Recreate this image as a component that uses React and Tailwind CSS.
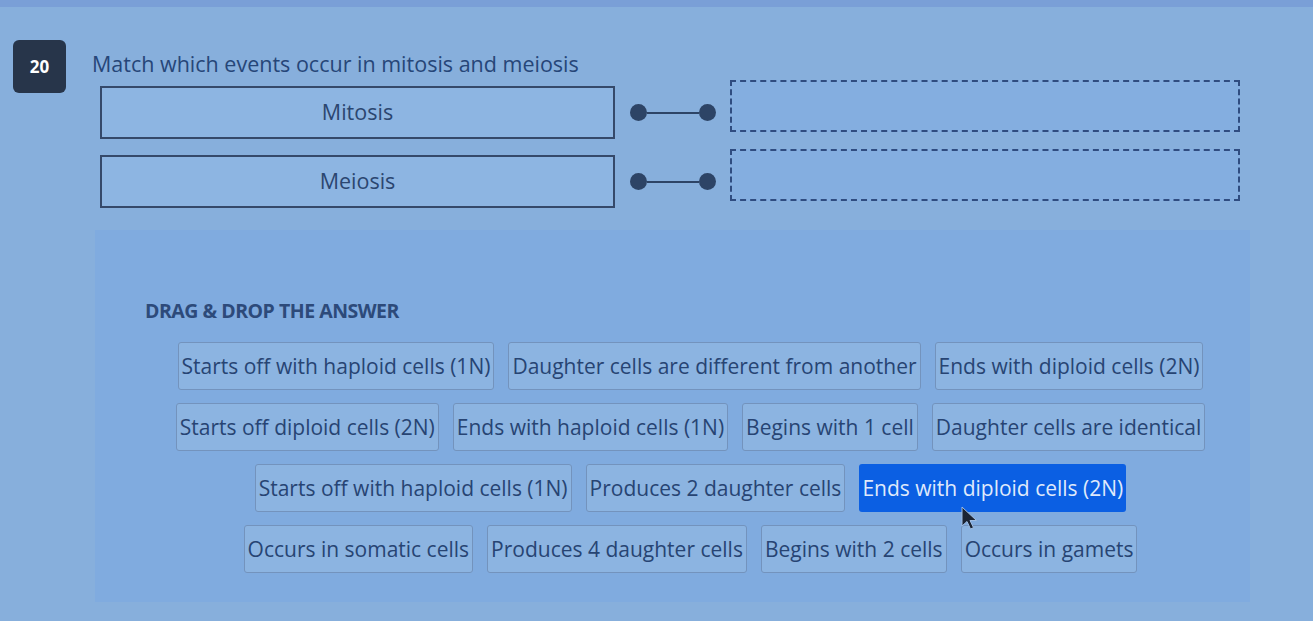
import React from 'react'

const rows = [
  ['Starts off with haploid cells (1N)', 'Daughter cells are different from another', 'Ends with diploid cells (2N)'],
  ['Starts off diploid cells (2N)', 'Ends with haploid cells (1N)', 'Begins with 1 cell', 'Daughter cells are identical'],
  ['Starts off with haploid cells (1N)', 'Produces 2 daughter cells', 'Ends with diploid cells (2N)'],
  ['Occurs in somatic cells', 'Produces 4 daughter cells', 'Begins with 2 cells', 'Occurs in gamets'],
]

const Connector = () => (
  <div className="flex w-[115px] items-center justify-center">
    <span className="h-[17px] w-[17px] rounded-full bg-[#2d4466]" />
    <span className="h-[2px] w-[52px] bg-[#2d4466]" />
    <span className="h-[17px] w-[17px] rounded-full bg-[#2d4466]" />
  </div>
)

const MatchRow = ({ label }) => (
  <div className="flex items-center">
    <div className="flex h-[53px] w-[515px] items-center justify-center border-2 border-[#35496a] bg-[#8db5e2] text-[21.5px] text-[#2b4670]">
      {label}
    </div>
    <Connector />
    <div className="-mt-[14px] h-[52px] w-[510px] border-2 border-dashed border-[#2f4c80] bg-[#84aee0]" />
  </div>
)

const Chip = ({ text, active }) => (
  <div
    className={
      active
        ? 'flex h-[48px] items-center rounded-[3px] bg-[#0b5fe3] px-[3px] text-[21px] text-[#dfe9fb]'
        : 'flex h-[48px] items-center rounded-[3px] border border-[#7393bd] bg-[#8cb4e1] px-[3px] text-[21px] text-[#274473]'
    }
  >
    {text}
  </div>
)

export default function App() {
  return (
    <div className="relative h-[621px] w-full overflow-hidden bg-[#87afdc] font-['Open_Sans',sans-serif]">
      <div className="h-[7px] bg-[#7a9fd7]" />

      <div className="flex pl-[13px] pt-[33px]">
        <div className="flex h-[53px] w-[53px] items-center justify-center rounded-md bg-[#27354a] text-[17px] font-bold text-white">
          20
        </div>
        <div className="ml-[26px]">
          <h2 className="mt-[10px] text-[21.5px] leading-[28px] text-[#264678]">
            Match which events occur in mitosis and meiosis
          </h2>
          <div className="ml-[8px] mt-[8px] flex flex-col gap-[16px]">
            <MatchRow label="Mitosis" />
            <MatchRow label="Meiosis" />
          </div>
        </div>
      </div>

      <div className="ml-[95px] mt-[22px] h-[372px] w-[1155px] bg-[#80abdf] pt-[66px]">
        <p className="pl-[50px] text-[19.5px] font-bold uppercase tracking-tight text-[#2d4a7a]">
          Drag &amp; Drop the answer
        </p>
        <div className="mt-[17px] flex flex-col gap-[13px] pl-[36px]">
          {rows.map((row, i) => (
            <div key={i} className="flex justify-center gap-[14px]">
              {row.map((t, j) => (
                <Chip key={j} text={t} active={i === 2 && j === 2} />
              ))}
            </div>
          ))}
        </div>
      </div>

      {/* mouse pointer resting on the highlighted chip */}
      <svg className="absolute left-[960px] top-[506px]" width="20" height="26" viewBox="0 0 20 26">
        <path d="M2 1 L2 20 L7 15.5 L10.5 23 L13.5 21.6 L10 14.5 L16.5 14.5 Z" fill="#1b2433" stroke="#9fbde3" strokeWidth="1" />
      </svg>
    </div>
  )
}
